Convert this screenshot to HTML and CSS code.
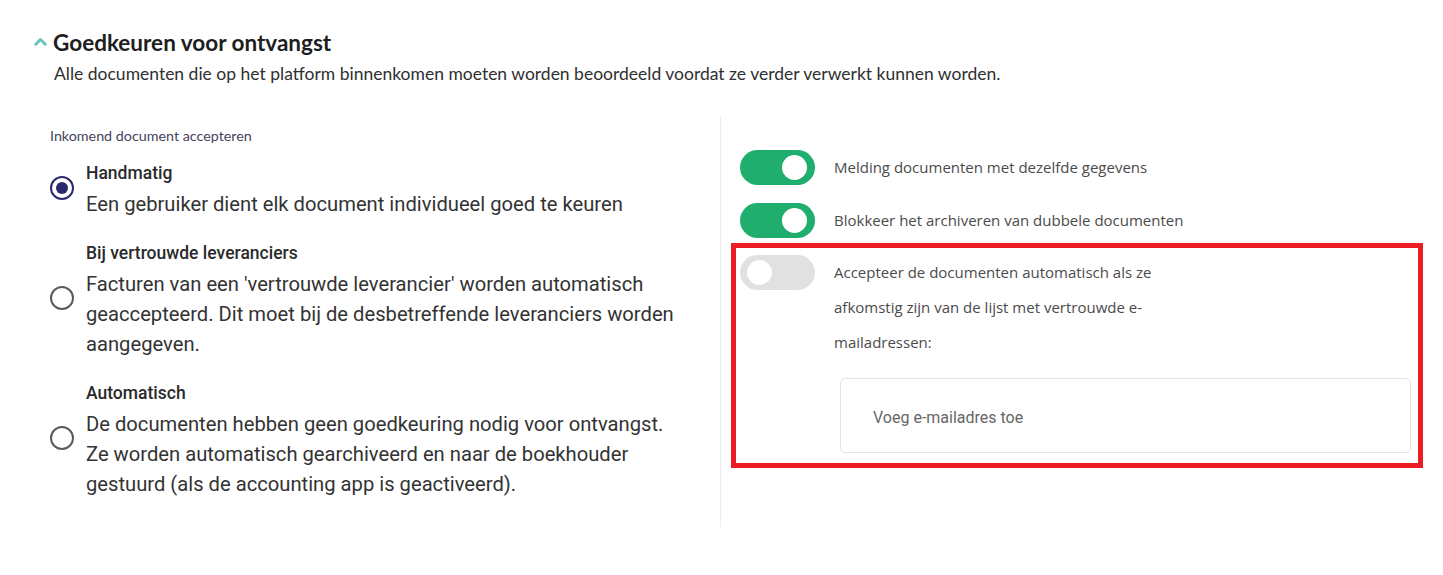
FILE: index.html
```html
<!DOCTYPE html>
<html lang="nl">
<head>
<meta charset="utf-8">
<title>Goedkeuren voor ontvangst</title>
<link rel="stylesheet" href="styles.css">
</head>
<body>
<div class="page">
  <div class="header">
    <svg class="chevron" width="13" height="9" viewBox="0 0 13 9"><polyline points="1.8,7.2 6.5,2.5 11.2,7.2" fill="none" stroke="#68c4bb" stroke-width="3" stroke-linecap="round" stroke-linejoin="round"/></svg>
    <h2 class="title">Goedkeuren voor ontvangst</h2>
  </div>
  <p class="intro">Alle documenten die op het platform binnenkomen moeten worden beoordeeld voordat ze verder verwerkt kunnen worden.</p>

  <div class="columns">
    <div class="left">
      <div class="group-label">Inkomend document accepteren</div>
      <div class="option">
        <span class="radio checked"></span>
        <div class="option-text">
          <div class="option-title">Handmatig</div>
          <div class="option-desc">Een gebruiker dient elk document individueel goed te keuren</div>
        </div>
      </div>
      <div class="option">
        <span class="radio"></span>
        <div class="option-text">
          <div class="option-title">Bij vertrouwde leveranciers</div>
          <div class="option-desc">Facturen van een 'vertrouwde leverancier' worden automatisch geaccepteerd. Dit moet bij de desbetreffende leveranciers worden aangegeven.</div>
        </div>
      </div>
      <div class="option">
        <span class="radio"></span>
        <div class="option-text">
          <div class="option-title">Automatisch</div>
          <div class="option-desc">De documenten hebben geen goedkeuring nodig voor ontvangst. Ze worden automatisch gearchiveerd en naar de boekhouder gestuurd (als de accounting app is geactiveerd).</div>
        </div>
      </div>
    </div>

    <div class="right">
      <div class="setting">
        <span class="toggle on"><span class="knob"></span></span>
        <span class="setting-text">Melding documenten met dezelfde gegevens</span>
      </div>
      <div class="setting">
        <span class="toggle on"><span class="knob"></span></span>
        <span class="setting-text">Blokkeer het archiveren van dubbele documenten</span>
      </div>
      <div class="highlight">
        <div class="setting setting-top">
          <span class="toggle"><span class="knob"></span></span>
          <span class="setting-text narrow">Accepteer de documenten automatisch als ze afkomstig zijn van de lijst met vertrouwde e-mailadressen:</span>
        </div>
        <div class="email-input">Voeg e-mailadres toe</div>
      </div>
    </div>
  </div>
</div>
</body>
</html>
```

FILE: styles.css
```css
* { box-sizing: border-box; }

body {
  margin: 0;
  background: #ffffff;
  font-family: "Lato", "Open Sans", sans-serif;
  color: #222222;
}

.page {
  padding: 28px 20px 0 34px;
}

.header {
  display: flex;
  align-items: center;
  gap: 6px;
  height: 30px;
}

.chevron {
  display: block;
  margin-top: -3px;
}

.title {
  margin: 0;
  font-family: "Lato", sans-serif;
  font-weight: 700;
  font-size: 22.5px;
  line-height: 30px;
  color: #1e1e1e;
}

.intro {
  margin: 4px 0 0 20px;
  font-family: "Lato", sans-serif;
  font-size: 17.5px;
  line-height: 24px;
  color: #2f2f2f;
}

.columns {
  display: flex;
  margin-top: 30px;
}

.left {
  flex: 0 0 686px;
  padding: 10px 40px 28px 16px;
}

.group-label {
  font-family: "Lato", sans-serif;
  font-size: 14.3px;
  line-height: 20px;
  color: #45435a;
  margin-bottom: 11px;
}

.option {
  display: flex;
  align-items: center;
  gap: 12px;
  margin-bottom: 18px;
}

.option:last-child { margin-bottom: 0; }

.radio {
  flex: 0 0 24px;
  width: 24px;
  height: 24px;
  border-radius: 50%;
  border: 2px solid #5a5a5a;
  display: flex;
  align-items: center;
  justify-content: center;
}

.radio.checked {
  border: 2.5px solid #2c2a6f;
}

.radio.checked::after {
  content: "";
  width: 12px;
  height: 12px;
  border-radius: 50%;
  background: #2c2a6f;
}

.option-text {
  font-family: "Roboto", sans-serif;
  color: #2b2b2b;
}

.option-title {
  font-size: 17.5px;
  font-weight: 500;
  line-height: 32px;
  color: #2a2a2a;
}

.option-desc {
  font-size: 20.2px;
  line-height: 30px;
  color: #333333;
}

.right {
  flex: 1;
  border-left: 1px solid #ececec;
  padding: 34px 0 0 10px;
}

.setting {
  display: flex;
  align-items: flex-start;
  gap: 19px;
  padding-left: 9px;
  margin-bottom: 18px;
}

.setting-top {
  padding-left: 0;
  margin-bottom: 0;
}

.toggle {
  position: relative;
  flex: 0 0 75px;
  width: 75px;
  height: 35px;
  border-radius: 18px;
  background: #e1e1e1;
}

.toggle.on {
  background: #1fae6e;
}

.knob {
  position: absolute;
  top: 5px;
  left: 7px;
  width: 25px;
  height: 25px;
  border-radius: 50%;
  background: #ffffff;
}

.toggle.on .knob {
  left: auto;
  right: 8px;
}

.setting-text {
  font-family: "Open Sans", sans-serif;
  font-size: 15px;
  line-height: 35px;
  color: #4b4b4b;
}

.setting-text.narrow {
  width: 330px;
}

.highlight {
  margin-top: -13px;
  border: 5px solid #ed1c24;
  padding: 7px 7px 10px 4px;
}

.email-input {
  margin: 18px 0 0 100px;
  height: 75px;
  border: 1px solid #e4e4e4;
  border-radius: 5px;
  padding-left: 32px;
  display: flex;
  align-items: center;
  padding-top: 4px;
  font-family: "Roboto", sans-serif;
  font-size: 16px;
  color: #666666;
}
```
